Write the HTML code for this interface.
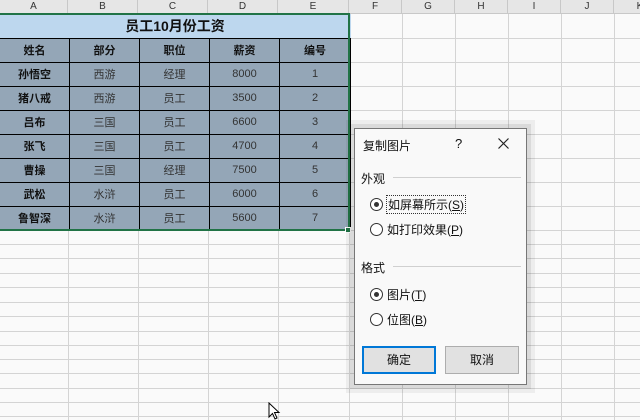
<!DOCTYPE html>
<html><head><meta charset="utf-8"><style>
*{margin:0;padding:0;box-sizing:border-box}
body{width:640px;height:420px;overflow:hidden;background:#fafafa;position:relative;font-family:"Liberation Sans","Noto Sans CJK SC",sans-serif;}
.hdr{position:absolute;top:0;left:0;width:640px;height:14px;background:#e6e6e6;border-bottom:1px solid #c8c8c8}
.hdr div{position:absolute;top:0;height:14px;font-size:10px;line-height:14px;text-align:center;border-right:1px solid #c8c8c8;color:#333}
.vl{position:absolute;width:1px;background:#d4d4d4;top:14px;height:406px}
.hl{position:absolute;height:1px;background:#d4d4d4;left:0;width:640px}
table{position:absolute;left:-1px;top:14px;border-collapse:collapse}
td{border:1.5px solid #000;text-align:center;font-size:11px;height:24px;padding:0;background:#94a6b7;color:#333}
td.b{font-weight:bold;color:#111}
.sel{position:absolute;left:-2px;top:13px;width:352px;height:218px;border:2px solid #217346}
.dlg{position:absolute;left:354px;top:128px;width:173px;height:257px;background:#f9f9f9;border:1px solid #777;box-shadow:0 0 0 4px rgba(0,0,0,0.08),0 0 0 8px rgba(0,0,0,0.05);font-size:12px;color:#111}
.dlg .t{position:absolute;}
.rad{position:absolute;width:13px;height:13px;border:1px solid #333;border-radius:50%;background:#fff}
.rad.on::after{content:"";position:absolute;left:3px;top:3px;width:5px;height:5px;border-radius:50%;background:#333}
.sep{position:absolute;height:1px;background:#d0d0d0}
.btn{position:absolute;height:28px;width:74px;background:#e1e1e1;border:1px solid #adadad;text-align:center;line-height:26px;font-size:12px}
</style></head><body>
<div class="hdr">
<div style="left:0;width:68px">A</div><div style="left:68px;width:70px">B</div><div style="left:138px;width:70px">C</div><div style="left:208px;width:70px">D</div><div style="left:278px;width:71px">E</div><div style="left:349px;width:53px">F</div><div style="left:402px;width:53px">G</div><div style="left:455px;width:53px">H</div><div style="left:508px;width:53px">I</div><div style="left:561px;width:53px">J</div><div style="left:614px;width:53px">K</div>
</div>
<div class="vl" style="left:68px"></div><div class="vl" style="left:138px"></div><div class="vl" style="left:208px"></div><div class="vl" style="left:278px"></div><div class="vl" style="left:349px"></div><div class="vl" style="left:402px"></div><div class="vl" style="left:455px"></div><div class="vl" style="left:508px"></div><div class="vl" style="left:561px"></div><div class="vl" style="left:614px"></div>
<div class="hl" style="top:38px"></div><div class="hl" style="top:62px"></div><div class="hl" style="top:86px"></div><div class="hl" style="top:110px"></div><div class="hl" style="top:134px"></div><div class="hl" style="top:158px"></div><div class="hl" style="top:182px"></div><div class="hl" style="top:206px"></div><div class="hl" style="top:230px"></div>
<div class="hl" style="top:244px"></div><div class="hl" style="top:258px"></div><div class="hl" style="top:273px"></div><div class="hl" style="top:287px"></div><div class="hl" style="top:302px"></div><div class="hl" style="top:316px"></div><div class="hl" style="top:331px"></div><div class="hl" style="top:345px"></div><div class="hl" style="top:359px"></div><div class="hl" style="top:373px"></div><div class="hl" style="top:388px"></div><div class="hl" style="top:402px"></div><div class="hl" style="top:416px"></div>
<table>
<tr><td colspan="5" style="background:#bdd7ee;font-size:14px;font-weight:bold;color:#111;border-top:none;border-left:none;border-right:none">员工10月份工资</td></tr>
<tr><td class="b" style="width:70px">姓名</td><td class="b" style="width:70px">部分</td><td class="b" style="width:70px">职位</td><td class="b" style="width:70px">薪资</td><td class="b" style="width:71px">编号</td></tr>
<tr><td class="b">孙悟空</td><td>西游</td><td>经理</td><td>8000</td><td>1</td></tr>
<tr><td class="b">猪八戒</td><td>西游</td><td>员工</td><td>3500</td><td>2</td></tr>
<tr><td class="b">吕布</td><td>三国</td><td>员工</td><td>6600</td><td>3</td></tr>
<tr><td class="b">张飞</td><td>三国</td><td>员工</td><td>4700</td><td>4</td></tr>
<tr><td class="b">曹操</td><td>三国</td><td>经理</td><td>7500</td><td>5</td></tr>
<tr><td class="b">武松</td><td>水浒</td><td>员工</td><td>6000</td><td>6</td></tr>
<tr><td class="b">鲁智深</td><td>水浒</td><td>员工</td><td>5600</td><td>7</td></tr>
</table>
<div class="sel"></div>
<div style="position:absolute;left:345px;top:227px;width:6px;height:6px;background:#217346;border:1px solid #fff"></div>
<div class="dlg">
<div class="t" style="left:8px;top:8px">复制图片</div>
<div class="t" style="left:100px;top:7px;font-size:13px">?</div>
<svg style="position:absolute;left:143px;top:9px" width="11" height="11"><path d="M0.5 0.5L10.5 10.5M10.5 0.5L0.5 10.5" stroke="#222" stroke-width="1.2"/></svg>
<div class="t" style="left:6px;top:41px">外观</div><div class="sep" style="left:38px;top:48px;width:128px"></div>
<div class="rad on" style="left:15px;top:69px"></div><div class="t" style="left:32px;top:67px;outline:1px dotted #333;padding:0 1px">如屏幕所示(<u>S</u>)</div>
<div class="rad" style="left:15px;top:94px"></div><div class="t" style="left:32px;top:92px">如打印效果(<u>P</u>)</div>
<div class="t" style="left:6px;top:130px">格式</div><div class="sep" style="left:38px;top:137px;width:128px"></div>
<div class="rad on" style="left:15px;top:159px"></div><div class="t" style="left:32px;top:157px">图片(<u>T</u>)</div>
<div class="rad" style="left:15px;top:184px"></div><div class="t" style="left:32px;top:182px">位图(<u>B</u>)</div>
<div class="btn" style="left:7px;top:217px;border:2px solid #0078d7;line-height:24px">确定</div>
<div class="btn" style="left:90px;top:217px">取消</div>
</div>
<svg style="position:absolute;left:268px;top:402px" width="14" height="18"><path d="M1 1L1 15L4.5 11.5L7 17L9 16L6.5 10.5L11 10.5Z" fill="#fff" stroke="#000" stroke-width="1"/></svg>
</body></html>
